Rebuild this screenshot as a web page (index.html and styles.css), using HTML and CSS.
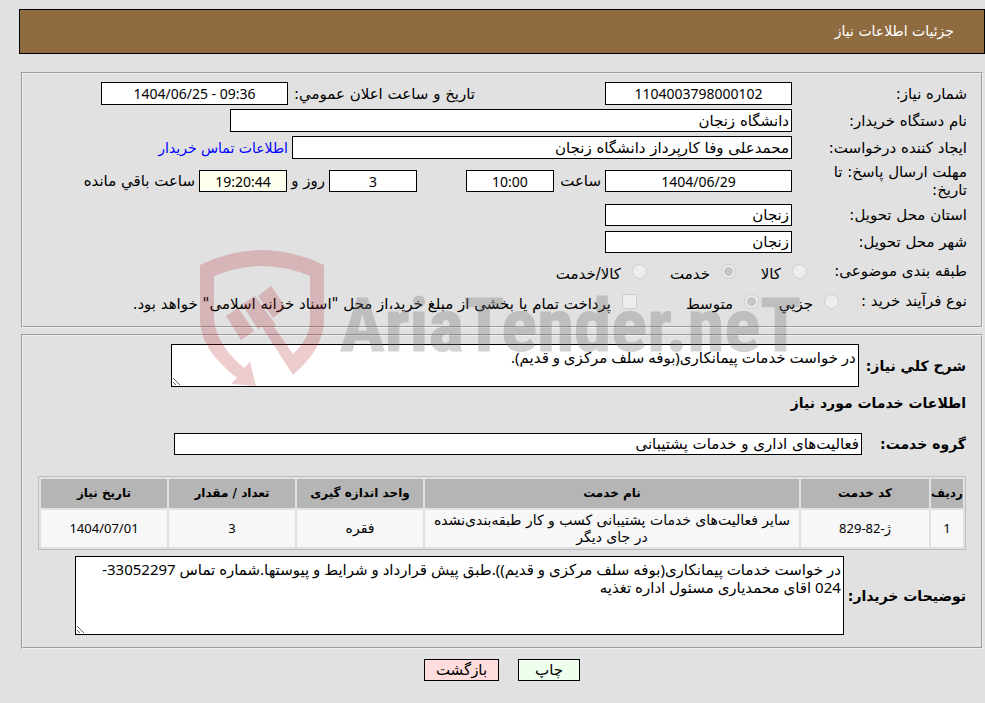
FILE: index.html
```html
<!DOCTYPE html>
<html lang="fa" dir="rtl">
<head>
<meta charset="utf-8">
<title>جزئیات اطلاعات نیاز</title>
<link rel="stylesheet" href="styles.css">
</head>
<body>
<header class="titlebar">جزئیات اطلاعات نیاز</header>
<main class="page">
  <fieldset class="panel panel-info">
    <div class="row">
      <label class="name" for="need-no">شماره نیاز:</label>
      <input class="box date mid" id="need-no" value="1104003798000102" readonly>
      <label class="announce" for="announce">تاریخ و ساعت اعلان عمومي:</label>
      <input class="box date mid" id="announce" dir="ltr" value="1404/06/25 - 09:36" readonly>
    </div>
    <div class="row">
      <label class="name" for="org">نام دستگاه خریدار:</label>
      <input class="box org" id="org" value="دانشگاه زنجان" readonly>
    </div>
    <div class="row">
      <label class="name" for="creator">ایجاد کننده درخواست:</label>
      <input class="box creator" id="creator" value="محمدعلی وفا کارپرداز دانشگاه زنجان" readonly>
      <a class="contact" href="#">اطلاعات تماس خریدار</a>
    </div>
    <div class="row row-deadline">
      <label class="name" for="deadline">مهلت ارسال پاسخ: تا تاریخ:</label>
      <input class="box low date mid" id="deadline" value="1404/06/29" readonly>
      <label class="unit unit-hour" for="hour">ساعت</label>
      <input class="box low short mid" id="hour" value="10:00" readonly>
      <input class="box low short mid days" id="days" value="3" aria-label="روز" readonly>
      <label class="unit unit-day" for="days">روز و</label>
      <input class="box low short mid timer" id="timer" value="19:20:44" readonly>
      <label class="unit" for="timer">ساعت باقي مانده</label>
    </div>
    <div class="row">
      <label class="name" for="province">استان محل تحویل:</label>
      <input class="box low date" id="province" value="زنجان" readonly>
    </div>
    <div class="row">
      <label class="name" for="city">شهر محل تحویل:</label>
      <input class="box low date" id="city" value="زنجان" readonly>
    </div>
    <div class="row row-kind">
      <span class="name name-kind">طبقه بندی موضوعی:</span>
      <label class="option option-first"><input type="radio" name="kind" disabled><span>کالا</span></label>
      <label class="option option-second"><input type="radio" name="kind" checked disabled><span>خدمت</span></label>
      <label class="option"><input type="radio" name="kind" disabled><span>کالا/خدمت</span></label>
    </div>
    <div class="row row-process">
      <span class="name name-process">نوع فرآیند خرید :</span>
      <label class="option option-small"><input type="radio" name="process" disabled><span>جزیي</span></label>
      <label class="option option-medium"><input type="radio" name="process" checked disabled><span>متوسط</span></label>
      <label class="option"><input type="checkbox" disabled><span>پرداخت تمام یا بخشی از مبلغ خرید،از محل "اسناد خزانه اسلامی" خواهد بود.</span></label>
    </div>
  </fieldset>

  <fieldset class="panel panel-need">
    <div class="line line-summary">
      <label class="strong" for="summary">شرح کلي نیاز:</label>
      <textarea class="box area summary" id="summary" readonly>در خواست خدمات پیمانکاری(بوفه سلف مرکزی و قدیم).</textarea>
    </div>
    <h2 class="strong heading">اطلاعات خدمات مورد نیاز</h2>
    <div class="line line-group">
      <label class="strong" for="group">گروه خدمت:</label>
      <input class="box low group" id="group" value="فعالیت‌های اداری و خدمات پشتیبانی" readonly>
    </div>
    <table class="services">
      <thead>
        <tr><th class="c-row">ردیف</th><th class="c-code">کد خدمت</th><th>نام خدمت</th><th class="c-std">واحد اندازه گیری</th><th class="c-std">تعداد / مقدار</th><th class="c-std">تاریخ نیاز</th></tr>
      </thead>
      <tbody>
        <tr><td class="num">1</td><td class="num">ژ-82-829</td><td>سایر فعالیت‌های خدمات پشتیبانی کسب و کار طبقه‌بندی‌نشده در جای دیگر</td><td>فقره</td><td class="num">3</td><td class="num">1404/07/01</td></tr>
      </tbody>
    </table>
    <div class="line">
      <label class="strong" for="notes">توضیحات خریدار:</label>
      <textarea class="box area notes" id="notes" readonly>در خواست خدمات پیمانکاری(بوفه سلف مرکزی و قدیم)).طبق پیش قرارداد و شرایط و پیوستها.شماره تماس 33052297-024 اقای محمدیاری مسئول اداره تغذیه</textarea>
    </div>
  </fieldset>

  <div class="actions">
    <button class="btn btn-print" type="button">چاپ</button>
    <button class="btn btn-back" type="button">بازگشت</button>
  </div>
</main>

<div class="watermark" dir="ltr" aria-hidden="true">
  <svg class="shield" viewBox="0 0 126 137" width="126" height="137">
    <g fill="#af1e26">
      <path d="M0 15Q62-15 124 15V68C124 92 112 108 93 125L62 77L58 79L42 54L55 46L76 75L74 77L93 104C105 92 110 84 110 68V26Q62 6 14 26V68C15 88 28 104 44 118L50 112L56 136L31 134L37 128C14 109 0 92 0 68Z"/>
      <path d="M26 66L38 58L54 81L41 90ZM58 46L71 36L86 58L73 68Z"/>
    </g>
  </svg>
  <span class="wordmark">AriaTender.neT</span>
</div>
</body>
</html>
```
FILE: styles.css
```css
* { box-sizing: border-box; }

body {
  margin: 0;
  padding: 9px 0 22px 19px;
  position: relative;
  background: #e1e1e1;
  color: #000;
  font: 15px/18px "DejaVu Sans", sans-serif;
}

input, textarea, button { font: inherit; color: inherit; }

.titlebar {
  height: 45px;
  padding: 0 30px;
  border: 1px solid #000;
  background: #8f6c40;
  color: #fff;
  font-size: 14px;
  line-height: 43px;
}

.page { padding: 18px 2px 0; }

.panel {
  min-width: 0;
  margin: 0;
  border: 2px groove #f0f0f0;
}

.panel-info {
  display: flex;
  flex-direction: column;
  gap: 4px;
  padding: 8px 14px 13px;
}

.row {
  display: flex;
  align-items: center;
  min-height: 23px;
}

.row-deadline { min-height: 36px; }
.row-kind { min-height: 28px; }
.row-process { min-height: 24px; }

.name {
  flex: none;
  width: 175px;
  padding-left: 30px;
}

.name-kind { width: 160px; padding: 0; }
.name-process { width: 128px; padding: 0; }

.box {
  height: 23px;
  margin: 0;
  padding: 0 2px;
  border: 1px solid #000;
  border-radius: 0;
  background: #fff;
  outline: 0;
}

.low { height: 22px; }
.mid { text-align: center; font-family: "Noto Sans", "DejaVu Sans", sans-serif; font-size: 14px; }
.date { width: 187px; }
.short { width: 88px; }
.org { width: 562px; }
.creator { width: 500px; }
.timer { background: #ffffee; }
.days { margin-right: 49px; }

.announce {
  width: 187px;
  margin-right: 130px;
  white-space: nowrap;
}

.unit { padding-right: 4px; white-space: nowrap; }
.unit-hour { width: 51px; }
.unit-day { width: 42px; }

.contact {
  padding-right: 4px;
  color: #00f;
  font-size: 14px;
  text-decoration: none;
}

.option {
  display: flex;
  align-items: center;
  white-space: nowrap;
}

.option span { padding-top: 6px; }
.option-first { width: 71px; }
.option-second { width: 89px; }
.option-small { width: 80px; }
.option-medium { width: 122px; }

.option input {
  appearance: none;
  flex: none;
  width: 15px;
  height: 15px;
  margin: 0 0 0 11px;
  border: 1px solid #cdcdcd;
  border-radius: 50%;
  background: #ededed;
}

.option input:checked {
  background: radial-gradient(circle, #c6c6c6 4px, #ededed 5px);
}

.option input[type="checkbox"] { border-radius: 2px; }

.panel-need {
  margin-top: 6px;
  padding: 8px 15px 12px;
}

.line {
  display: flex;
  align-items: center;
  gap: 4px;
}

.strong {
  flex: none;
  margin: 0;
  font-size: 14px;
  font-weight: bold;
  line-height: 18px;
}

.heading { margin: 7px 0 21px; }
.line-summary { gap: 7px; }
.line-group { gap: 18px; }

.area {
  display: block;
  padding: 3px 2px;
  font-family: "Noto Sans", "DejaVu Sans", sans-serif;
  line-height: 18px;
  resize: both;
  overflow: auto;
}

.summary { width: 688px; height: 43px; }
.notes { width: 769px; height: 79px; }
.group { width: 688px; }

.services {
  width: 928px;
  max-width: 100%;
  margin: 21px 0 6px;
  border: 1px solid #bebebe;
  border-collapse: separate;
  border-spacing: 2px;
  table-layout: fixed;
  text-align: center;
  font-size: 14px;
  line-height: 17px;
}

.services th { height: 29px; padding: 0; background: #b5b5b5; font-size: 12px; }
.services td { height: 37px; padding: 1px 5px; background: #f7f7f7; }
.services .num { font-family: "Noto Sans", "DejaVu Sans", sans-serif; font-size: 13px; }
.c-row { width: 32px; }
.c-code { width: 128px; }
.c-std { width: 126px; }

.actions {
  display: flex;
  justify-content: center;
  gap: 19px;
  padding-top: 10px;
}

.btn {
  height: 22px;
  padding: 0;
  border: 1px solid #000;
}

.btn-print { width: 62px; background: #eeffee; }
.btn-back { width: 75px; background: #ffdddd; }

/* Translucent brand mark laid over the form */
.watermark {
  position: absolute;
  top: 250px;
  left: 200px;
  display: flex;
  align-items: flex-start;
  gap: 14px;
  pointer-events: none;
}

.shield { opacity: .22; }

.wordmark {
  padding-top: 30px;
  color: #707070;
  opacity: .3;
  font: bold 75px/90px "Liberation Sans Narrow", "Roboto Condensed", "Liberation Sans", sans-serif;
  -webkit-text-stroke: 1px #707070;
}
```
